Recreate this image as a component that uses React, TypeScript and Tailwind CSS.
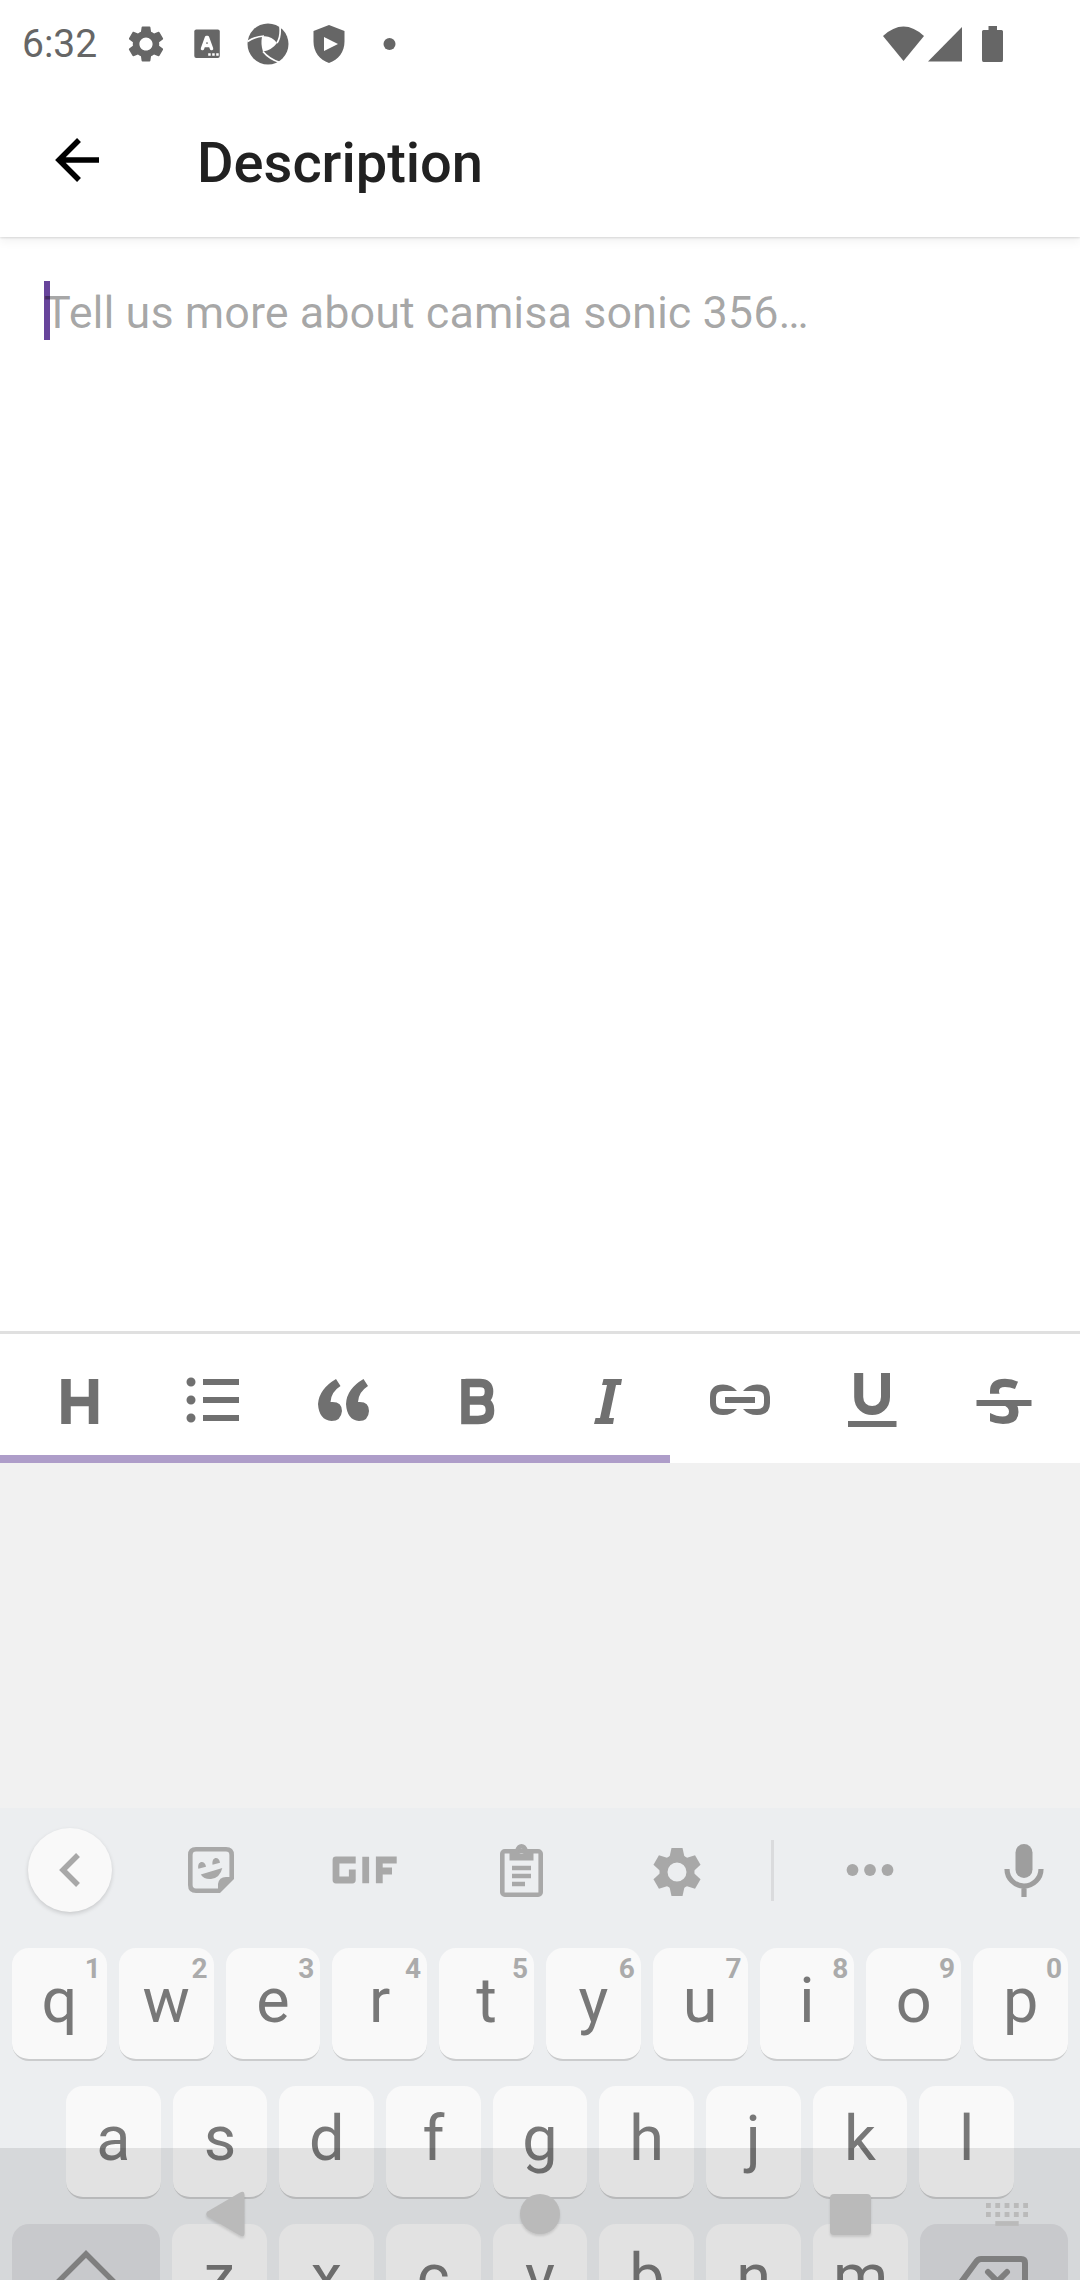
import type { ReactNode } from "react";
import { MdSettings } from "react-icons/md";

function StatusBar() {
  return (
    <div className="flex h-[83px] items-center pt-1 pr-[77px] pl-[22px] text-[#666666]">
      <span className="w-[102px] text-[39px] leading-[44px]">6:32</span>
      <div className="flex items-center gap-[17px]">
        <MdSettings className="size-11" aria-hidden="true" />
        <svg className="size-11" viewBox="0 0 44 44" fill="currentColor" aria-hidden="true">
          <rect x="9.300" y="7.500" width="25.500" height="28.500" rx="2" />
          <path
            d="M17.500 26.500L21.500 15.500H22.500L26.500 26.500M19 23.500h6"
            fill="none"
            stroke="#fff"
            strokeWidth="3.500"
            strokeLinecap="round"
            strokeLinejoin="round"
          />
          <path d="M23.200 32.500h2.500M27.200 32.500h2.500M31.200 32.500h2.500" stroke="#fff" strokeWidth="2.500" />
        </svg>
        <svg className="size-11" viewBox="-22 -22 44 44" fill="currentColor" aria-hidden="true">
          <circle r="20.500" />
          <path d="M-6 -7.500Q3 -9 9 -1Q4 6 -5 7.500Q-7.500 0 -6 -7.500Z" fill="#fff" />
          <path
            d="M9 -1Q13 -7 12 -17M-4 -8Q-13 -7.500 -20.500 -2.500M-5 7.500Q1 15 12 18.500"
            fill="none"
            stroke="#fff"
            strokeWidth="1.700"
          />
        </svg>
        <svg className="size-11" viewBox="0 0 44 44" fill="currentColor" aria-hidden="true">
          <path d="M22 3L37.500 9V19.500C37.500 30 31.500 37.500 22 41C12.500 37.500 6.500 30 6.500 19.500V9ZM17 15V29L31 22Z" fillRule="evenodd" />
        </svg>
        <svg className="size-11" viewBox="0 0 44 44" fill="currentColor" aria-hidden="true">
          <circle cx="21.500" cy="22" r="6" />
        </svg>
      </div>
      <div className="ml-auto flex items-center">
        <svg className="mr-1 h-[36px] w-[41px]" viewBox="0 0 41 36" fill="currentColor" aria-hidden="true">
          <path d="M0 10Q20.500 -9 41 10L20.500 35Z" />
        </svg>
        <svg className="mr-5 h-[36px] w-[34px]" viewBox="0 0 34 36" fill="currentColor" aria-hidden="true">
          <path d="M34 1V35.500H0Z" />
        </svg>
        <svg className="h-[36px] w-[21px]" viewBox="0 0 21 36" fill="currentColor" aria-hidden="true">
          <path d="M6.500 0H15V4H19.500Q21 4 21 5.500V34Q21 36 19.500 36H1.500Q0 36 0 34V5.500Q0 4 1.500 4H6.500Z" />
        </svg>
      </div>
    </div>
  );
}

function AppBar() {
  return (
    <header className="flex h-[154px] items-center pl-[55px]">
      <button type="button" aria-label="Back" className="mr-[98px]">
        <svg className="size-11" viewBox="0 0 44 44" fill="none" stroke="#000" strokeWidth="5.500" aria-hidden="true">
          <path d="M44 22H5M24 2L4 22L24 42" />
        </svg>
      </button>
      <h1 className="pt-[6px] text-[56px] leading-[64px] font-medium text-[#212121]">Description</h1>
    </header>
  );
}

const formatTools: { label: string; icon: ReactNode }[] = [
  { label: "Heading", icon: <path d="M22 13V58M49.500 13V58M22 35.500H49.500" strokeWidth="9.500" /> },
  {
    label: "Bulleted list",
    icon: (
      <>
        <path d="M27 16H63M27 34H63M27 52H63" strokeWidth="6" />
        <path d="M15 16h.01M15 34h.01M15 52h.01" strokeWidth="9" strokeLinecap="round" />
      </>
    ),
  },
  {
    label: "Quote",
    icon: (
      <g fill="currentColor" stroke="none">
        <path d="M28 13L32.500 20Q23 26 22.500 36Q34 35 34 45Q33 55 23.500 55Q11 54 10 38Q11 23 28 13Z" />
        <path d="M55.500 13L60 20Q50.500 26 50 36Q61 35 61 45Q60.500 55 51 55Q39 54 38 38Q38.500 23 55.500 13Z" />
      </g>
    ),
  },
  {
    label: "Bold",
    icon: (
      <path
        d="M25.500 17H40Q49 17 49 25.500Q49 34.500 40 34.500H25.500M40 34.500Q50 34.500 50 44.500Q50 54 38 54H25.500V13"
        strokeWidth="8.600"
      />
    ),
  },
  {
    label: "Italic",
    icon: (
      <path
        d="M31.500 13H50L49 19H44L37 52H42L41 58H22L23.500 52H28L35 19H30Z"
        fill="currentColor"
        stroke="none"
      />
    ),
  },
  {
    label: "Link",
    icon: (
      <g fill="currentColor" stroke="none">
        <path d="M33 25Q28 18.500 19 18.500Q6 18.500 6 31V37Q6 49 19 49Q28 49 33 43H19Q12 43 12 37V31Q12 25 19 25Z" />
        <path d="M39 25Q44 18.500 53 18.500Q66 18.500 66 31V37Q66 49 53 49Q44 49 39 43H53Q60 43 60 37V31Q60 25 53 25Z" />
        <rect x="21" y="31" width="30" height="6" />
      </g>
    ),
  },
  {
    label: "Underline",
    icon: (
      <>
        <path d="M22.700 7V31C22.700 49 49.500 49 49.500 31V7" strokeWidth="9" />
        <path d="M12 58H60.500" strokeWidth="6" />
      </>
    ),
  },
  {
    label: "Strikethrough",
    icon: (
      <>
        <path d="M8.500 37H63.500" strokeWidth="6" />
        <g fill="currentColor" stroke="none">
          <path d="M22 27.700V25Q22 12.700 37 12.700Q44 12.700 50 15.700L47 23Q42 21 37 21Q31 21 31 25Q31 27 31.700 27.700Z" />
          <path d="M35 39Q41 41 41 45.500Q41 50.500 34.500 50.500Q29 50.500 22 47V55.300Q28 58 35 58Q50.500 58 50.500 46Q50.500 42 49 39Z" />
        </g>
      </>
    ),
  },
];

function FormatBar() {
  return (
    <div className="border-t-[3px] border-[#e0e0e0] bg-white">
      <div role="toolbar" aria-label="Formatting" className="flex justify-between overflow-hidden pt-8 pr-10 pb-[17px] pl-11">
        {formatTools.map((tool) => (
          <button key={tool.label} type="button" aria-label={tool.label} className="shrink-0 text-[#707070]">
            <svg className="size-[72px]" viewBox="0 0 72 72" fill="none" stroke="currentColor" aria-hidden="true">
              {tool.icon}
            </svg>
          </button>
        ))}
      </div>
      <div className="h-2 w-[62%] bg-[#ae9dc9]" />
    </div>
  );
}

const gearTeeth = [0, 60, 120, 180, 240, 300];

function SuggestionStrip() {
  return (
    <div className="flex h-[124px] items-center pr-9 pl-7 text-[#a8a8a8]">
      <button
        type="button"
        aria-label="Collapse"
        className="mr-[75px] flex size-[84px] items-center justify-center rounded-full bg-[#f9f9f9] shadow-[0_2px_4px_rgba(0,0,0,0.15)]"
      >
        <svg className="h-[36px] w-[22px]" viewBox="0 0 22 36" fill="none" stroke="currentColor" strokeWidth="5.500" aria-hidden="true">
          <path d="M19 3L4 18L19 33" />
        </svg>
      </button>
      <button type="button" aria-label="Stickers">
        <svg className="size-[48px]" viewBox="-1 -1 48 48" fill="currentColor" aria-hidden="true">
          <path
            d="M43.700 31V8Q43.700 2.300 38 2.300H8Q2.300 2.300 2.300 8V38Q2.300 43.700 8 43.700H31"
            fill="none"
            stroke="currentColor"
            strokeWidth="4.600"
          />
          <path d="M30 46V37Q31 30 38 30H46V32L32 46Z" />
          <path d="M10.300 21.700C9 13 17.500 13.500 18 19.700ZM24.500 17.700C23.500 9 31.500 9.500 32 15.700Z" />
          <path d="M12.800 27.500L34.300 21Q32 31 23 32Q16 32.500 12.800 27.500Z" />
        </svg>
      </button>
      <button type="button" aria-label="GIF" className="ml-[97px]">
        <svg className="h-[28px] w-[65px]" viewBox="0 0 65 28" fill="none" stroke="currentColor" strokeWidth="6.800" aria-hidden="true">
          <path d="M23.700 4H4V24H20.300V13.500" strokeLinejoin="round" />
          <path d="M33.700 .7V27.300M47.300 27.300V4H64.700M47 15H60" />
        </svg>
      </button>
      <button type="button" aria-label="Clipboard" className="ml-[103px]">
        <svg className="h-[53px] w-[43px]" viewBox="0 0 43 53" fill="currentColor" aria-hidden="true">
          <rect x="2.300" y="7.300" width="38.400" height="43.400" rx="2.500" fill="none" stroke="currentColor" strokeWidth="4.600" />
          <path d="M9.500 16.500V6H15Q17 0 21.500 0Q26 0 28 6H33.500V16.500ZM21.500 4.700A2.600 2.600 0 1 0 21.500 9.900A2.600 2.600 0 1 0 21.500 4.700Z" fillRule="evenodd" />
          <path d="M12 24H31M12 32H31M12 40H25" stroke="currentColor" strokeWidth="4.500" />
        </svg>
      </button>
      <button type="button" aria-label="Settings" className="ml-[109px] pt-1">
        <svg className="size-[50px]" viewBox="-25 -25 50 50" fill="currentColor" aria-hidden="true">
          <circle r="13.500" fill="none" stroke="currentColor" strokeWidth="8" />
          {gearTeeth.map((angle) => (
            <path key={angle} d="M-5.500 -24H5.500L7.500 -15L5 -12H-5L-7.500 -15Z" transform={`rotate(${angle})`} />
          ))}
        </svg>
      </button>
      <div className="ml-[69px] h-[61px] w-[3px] bg-[#dadbdd]" />
      <button type="button" aria-label="More" className="ml-[72px]">
        <svg className="h-3 w-[48px]" viewBox="0 0 48 12" fill="currentColor" aria-hidden="true">
          <circle cx="6.500" cy="6" r="5.900" />
          <circle cx="24" cy="6" r="5.900" />
          <circle cx="41.500" cy="6" r="5.900" />
        </svg>
      </button>
      <button type="button" aria-label="Voice input" className="ml-auto text-[#9e9e9e]">
        <svg className="h-[53px] w-10" viewBox="0 0 40 53" fill="currentColor" aria-hidden="true">
          <rect x="11.500" y="0" width="17" height="34" rx="8.500" />
          <path d="M3 25A17 17 0 0 0 37 25M20 43V53" fill="none" stroke="currentColor" strokeWidth="5.200" />
        </svg>
      </button>
    </div>
  );
}

function Key({ letter, hint }: { letter: string; hint?: string }) {
  return (
    <button
      type="button"
      className="relative h-[113px] min-w-0 flex-1 rounded-[17px] border-b-2 border-[#cbcccd] bg-[#f9f9f9] pb-[6px] text-[63px] leading-[80px] text-[#787878]"
    >
      {letter}
      {hint && <span className="absolute top-[5px] right-[6px] text-[28px] leading-8 font-bold text-[#ababab]">{hint}</span>}
    </button>
  );
}

function Keyboard() {
  return (
    <div className="h-[472px] overflow-hidden bg-[#eceef0]">
      <SuggestionStrip />
      <div className="flex flex-col gap-[25px] px-3 pt-4">
        <div className="flex gap-3">
          {[..."qwertyuiop"].map((letter, i) => (
            <Key key={letter} letter={letter} hint={String((i + 1) % 10)} />
          ))}
        </div>
        <div className="flex gap-3 px-[54px]">
          {[..."asdfghjkl"].map((letter) => (
            <Key key={letter} letter={letter} />
          ))}
        </div>
        <div className="flex gap-3">
          <button
            type="button"
            aria-label="Shift"
            className="flex h-[113px] w-[148px] justify-center rounded-[17px] bg-[#dcdde1] pt-[26px] text-[#8c8c8c]"
          >
            <svg className="h-[66px] w-[72px]" viewBox="0 0 72 66" fill="none" stroke="currentColor" strokeWidth="5.500" aria-hidden="true">
              <path d="M36 4L4 36H20V60H52V36H68Z" />
            </svg>
          </button>
          {[..."zxcvbnm"].map((letter) => (
            <Key key={letter} letter={letter} />
          ))}
          <button
            type="button"
            aria-label="Backspace"
            className="flex h-[113px] w-[148px] justify-center rounded-[17px] bg-[#dcdde1] pt-[30px] pr-1 text-[#8c8c8c]"
          >
            <svg className="h-[54px] w-[76px]" viewBox="0 0 76 54" fill="none" stroke="currentColor" strokeWidth="6" aria-hidden="true">
              <path d="M27 5H67Q71 5 71 9V45Q71 49 67 49H27Q25 49 23 46L8 27L22 8Q24 5 27 5Z" />
              <path d="M34 18L53 37M53 18L34 37" strokeLinecap="round" />
            </svg>
          </button>
        </div>
      </div>
    </div>
  );
}

function NavigationBar() {
  return (
    <nav
      aria-label="System navigation"
      className="absolute inset-x-0 bottom-0 flex h-[132px] items-center bg-black/9 pr-[52px] pl-[206px] text-[#bababa]"
    >
      <button type="button" aria-label="Back" className="drop-shadow-[0_2px_1px_rgba(0,0,0,0.12)]">
        <svg className="h-[46px] w-[39px]" viewBox="0 0 39 46" fill="currentColor" aria-hidden="true">
          <path d="M34 1.500Q38.500 -1 38.500 4V42Q38.500 47 34 44.500L1.500 25.500Q-1 23 1.500 20.500Z" />
        </svg>
      </button>
      <button
        type="button"
        aria-label="Home"
        className="ml-[275px] size-10 rounded-full bg-current drop-shadow-[0_2px_1px_rgba(0,0,0,0.12)]"
      />
      <button
        type="button"
        aria-label="Recent apps"
        className="ml-[270px] size-[41px] rounded-[4px] bg-current drop-shadow-[0_2px_1px_rgba(0,0,0,0.12)]"
      />
      <button type="button" aria-label="Switch keyboard" className="ml-auto">
        <svg className="h-[23px] w-[42px]" viewBox="0 0 42 23" fill="none" stroke="currentColor" strokeWidth="4.800" aria-hidden="true">
          <path d="M0 2.500H42M0 11.500H42" strokeDasharray="4.800 4.500" />
          <path d="M9.300 20.500H32.700" />
        </svg>
      </button>
    </nav>
  );
}

export default function App() {
  return (
    <div className="relative flex h-screen flex-col overflow-hidden bg-white font-['Roboto',sans-serif]">
      <div className="z-10 bg-white shadow-[0_1px_2px_rgba(0,0,0,0.12),0_4px_10px_rgba(0,0,0,0.06)]">
        <StatusBar />
        <AppBar />
      </div>
      <main className="relative flex flex-1 px-11 pt-11">
        <div className="absolute h-[59px] w-[6px] bg-[#67449b]" />
        <textarea
          aria-label="Description"
          placeholder="Tell us more about camisa sonic 356…"
          className="relative w-full resize-none bg-transparent text-[45px] leading-[64px] text-[#212121] outline-none placeholder:text-black/35"
        />
      </main>
      <FormatBar />
      <div className="h-[345px] bg-[#f1f1f1]" />
      <Keyboard />
      <NavigationBar />
    </div>
  );
}
